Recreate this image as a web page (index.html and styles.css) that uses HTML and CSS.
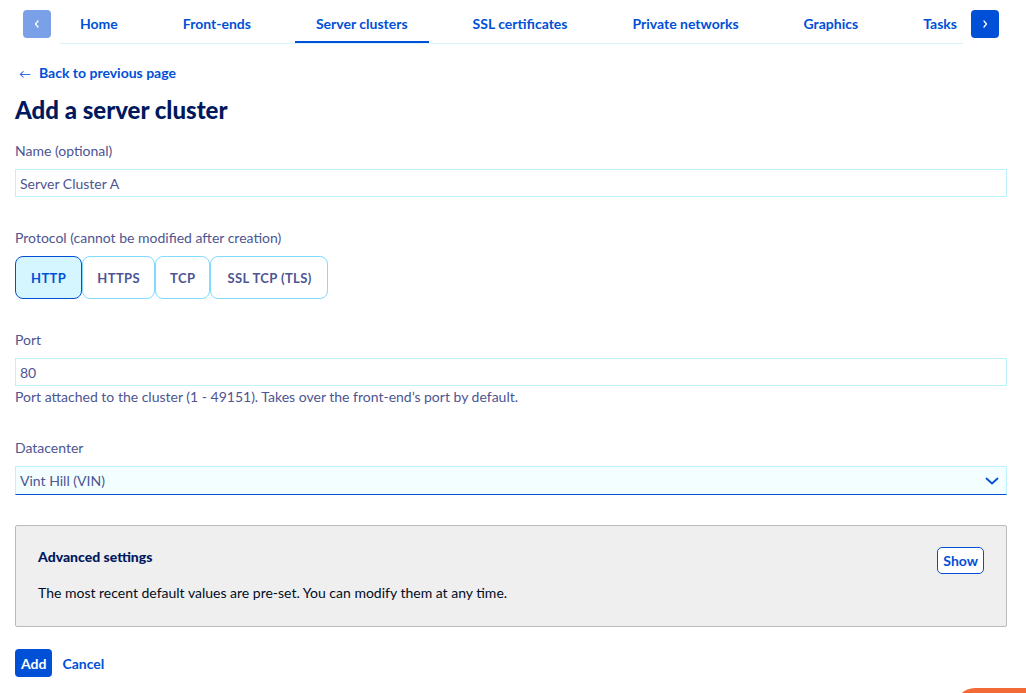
FILE: index.html
```html
<!DOCTYPE html>
<html lang="en">
<head>
    <meta charset="UTF-8">
    <title>Add a server cluster</title>
    <link rel="stylesheet" href="styles.css">
</head>
<body>

    <div class="tabbar">
        <button class="scroll scroll-prev" disabled>
            <svg width="10" height="10" viewBox="0 0 10 10"><path d="M6 2 L3.5 5 L6 8" fill="none" stroke="#fff" stroke-width="1.3" stroke-linecap="round"/></svg>
        </button>
        <div class="tabs">
            <a class="tab">Home</a>
            <a class="tab">Front-ends</a>
            <a class="tab active">Server clusters</a>
            <a class="tab">SSL certificates</a>
            <a class="tab">Private networks</a>
            <a class="tab">Graphics</a>
            <a class="tab">Tasks</a>
        </div>
        <button class="scroll scroll-next">
            <svg width="10" height="10" viewBox="0 0 10 10"><path d="M4 2 L6.5 5 L4 8" fill="none" stroke="#fff" stroke-width="1.3" stroke-linecap="round"/></svg>
        </button>
    </div>

    <div class="page">
        <a class="back"><span class="arrow">&larr;</span>Back to previous page</a>

        <h1>Add a server cluster</h1>

        <div class="field">
            <label>Name (optional)</label>
            <input class="input" type="text" value="Server Cluster A">
        </div>

        <div class="field">
            <label>Protocol (cannot be modified after creation)</label>
            <div class="radios">
                <span class="radio selected">HTTP</span>
                <span class="radio">HTTPS</span>
                <span class="radio">TCP</span>
                <span class="radio">SSL TCP (TLS)</span>
            </div>
        </div>

        <div class="field">
            <label>Port</label>
            <input class="input" type="text" value="80">
            <p class="help">Port attached to the cluster (1 - 49151). Takes over the front-end’s port by default.</p>
        </div>

        <div class="field">
            <label>Datacenter</label>
            <div class="select">
                <span>Vint Hill (VIN)</span>
                <svg width="14" height="10" viewBox="0 0 14 10"><path d="M1.5 2.5 L7 7.5 L12.5 2.5" fill="none" stroke="#0050d7" stroke-width="1.8" stroke-linecap="round" stroke-linejoin="round"/></svg>
            </div>
        </div>

        <div class="advanced">
            <div class="advanced-head">
                <h4>Advanced settings</h4>
                <button class="btn-outline">Show</button>
            </div>
            <p>The most recent default values are pre-set. You can modify them at any time.</p>
        </div>

        <div class="actions">
            <button class="btn-primary">Add</button>
            <a class="link">Cancel</a>
        </div>
    </div>

    <div class="chat"></div>

</body>
</html>
```

FILE: styles.css
```css
body {
    margin: 0px;
    font-family: Lato, "Open Sans", sans-serif;
    font-size: 14px;
    color: #4d5592;
    background-color: #fff;
    overflow: hidden;
    height: 693px;
    position: relative;
}

.tabbar {
    display: flex;
    align-items: flex-start;
    padding: 10px 0 0 23px;
    height: 34px;
}

.scroll {
    width: 28px;
    height: 28px;
    border: none;
    border-radius: 4px;
    padding: 0;
    display: flex;
    align-items: center;
    justify-content: center;
    flex-shrink: 0;
    background-color: #0050d7;
}

.scroll-prev {
    background-color: #7aa1e8;
}

.tabs {
    display: flex;
    gap: 23px;
    width: 904px;
    margin-left: 8px;
    overflow: hidden;
    border-bottom: 1px solid #d9f3ff;
    height: 33px;
}

.tab {
    flex-shrink: 0;
    padding: 0 21px;
    font-weight: bold;
    color: #0050d7;
    line-height: 28px;
    height: 31px;
    border-bottom: 2px solid transparent;
}

.tab.active {
    border-bottom-color: #0050d7;
}

.scroll-next {
    margin-left: 8px;
}

.page {
    padding: 0 19px 0 15px;
}

.back {
    display: block;
    margin-top: 19px;
    margin-left: 4px;
    font-weight: bold;
    color: #0050d7;
    line-height: 20px;
}

.back .arrow {
    font-weight: normal;
    font-size: 12px;
    margin-right: 8px;
}

h1 {
    margin: 9px 0 0 0;
    font-size: 24px;
    line-height: 34px;
    color: #00185e;
    font-weight: 900;
}

.field label {
    display: block;
    margin-top: 14px;
    line-height: 20px;
    padding-bottom: 8px;
}

.input {
    display: block;
    box-sizing: border-box;
    width: 100%;
    height: 28px;
    margin: 0;
    border: 1px solid #bef1ff;
    padding: 0 4px;
    font-family: inherit;
    font-size: 14px;
    color: #4d5592;
    outline: none;
}

.field + .field label {
    margin-top: 31px;
}

.radios {
    display: flex;
}

.radio {
    height: 43px;
    box-sizing: border-box;
    border: 1px solid #7fdcff;
    border-radius: 8px;
    padding: 0 14px;
    font-weight: bold;
    font-size: 13px;
    display: flex;
    align-items: center;
    letter-spacing: 0.4px;
}

.radio.selected {
    background-color: #d6f6ff;
    border-color: #0050d7;
    color: #0050d7;
    padding: 0 15px;
}

.radio:last-child {
    padding: 0 15px 0 16px;
}

.help {
    margin: 1px 0 0 0;
    line-height: 20px;
}

.select {
    box-sizing: border-box;
    height: 29px;
    background-color: #f2feff;
    border: 1px solid #bef1ff;
    border-bottom: 1px solid #0050d7;
    display: flex;
    align-items: center;
    justify-content: space-between;
    padding: 0 7px 0 4px;
}

.advanced {
    margin-top: 30px;
    background-color: #efefef;
    border: 1px solid #bbbbbb;
    border-radius: 2px;
    padding: 21px 22px 23px 22px;
    color: #000d26;
}

.advanced-head {
    display: flex;
    justify-content: space-between;
    align-items: flex-start;
}

.advanced h4 {
    margin: 0;
    font-size: 14px;
    line-height: 20px;
    color: #00185e;
    font-weight: 900;
}

.btn-outline {
    height: 27px;
    padding: 0 5px;
    background-color: #fff;
    border: 1px solid #0050d7;
    border-radius: 5px;
    color: #0050d7;
    font-family: inherit;
    font-weight: bold;
    font-size: 14px;
}

.advanced p {
    margin: 9px 0 0 0;
    line-height: 20px;
}

.actions {
    display: flex;
    align-items: center;
    gap: 10px;
    margin-top: 22px;
}

.btn-primary {
    height: 28px;
    padding: 0 6px;
    border: none;
    border-radius: 4px;
    background-color: #0050d7;
    color: #fff;
    font-family: inherit;
    font-weight: bold;
    font-size: 14px;
}

.link {
    font-weight: bold;
    color: #0050d7;
}

.chat {
    position: absolute;
    left: 955px;
    top: 688px;
    width: 120px;
    height: 40px;
    border-radius: 20px 0 0 0;
    background-color: #f26b36;
}
```
